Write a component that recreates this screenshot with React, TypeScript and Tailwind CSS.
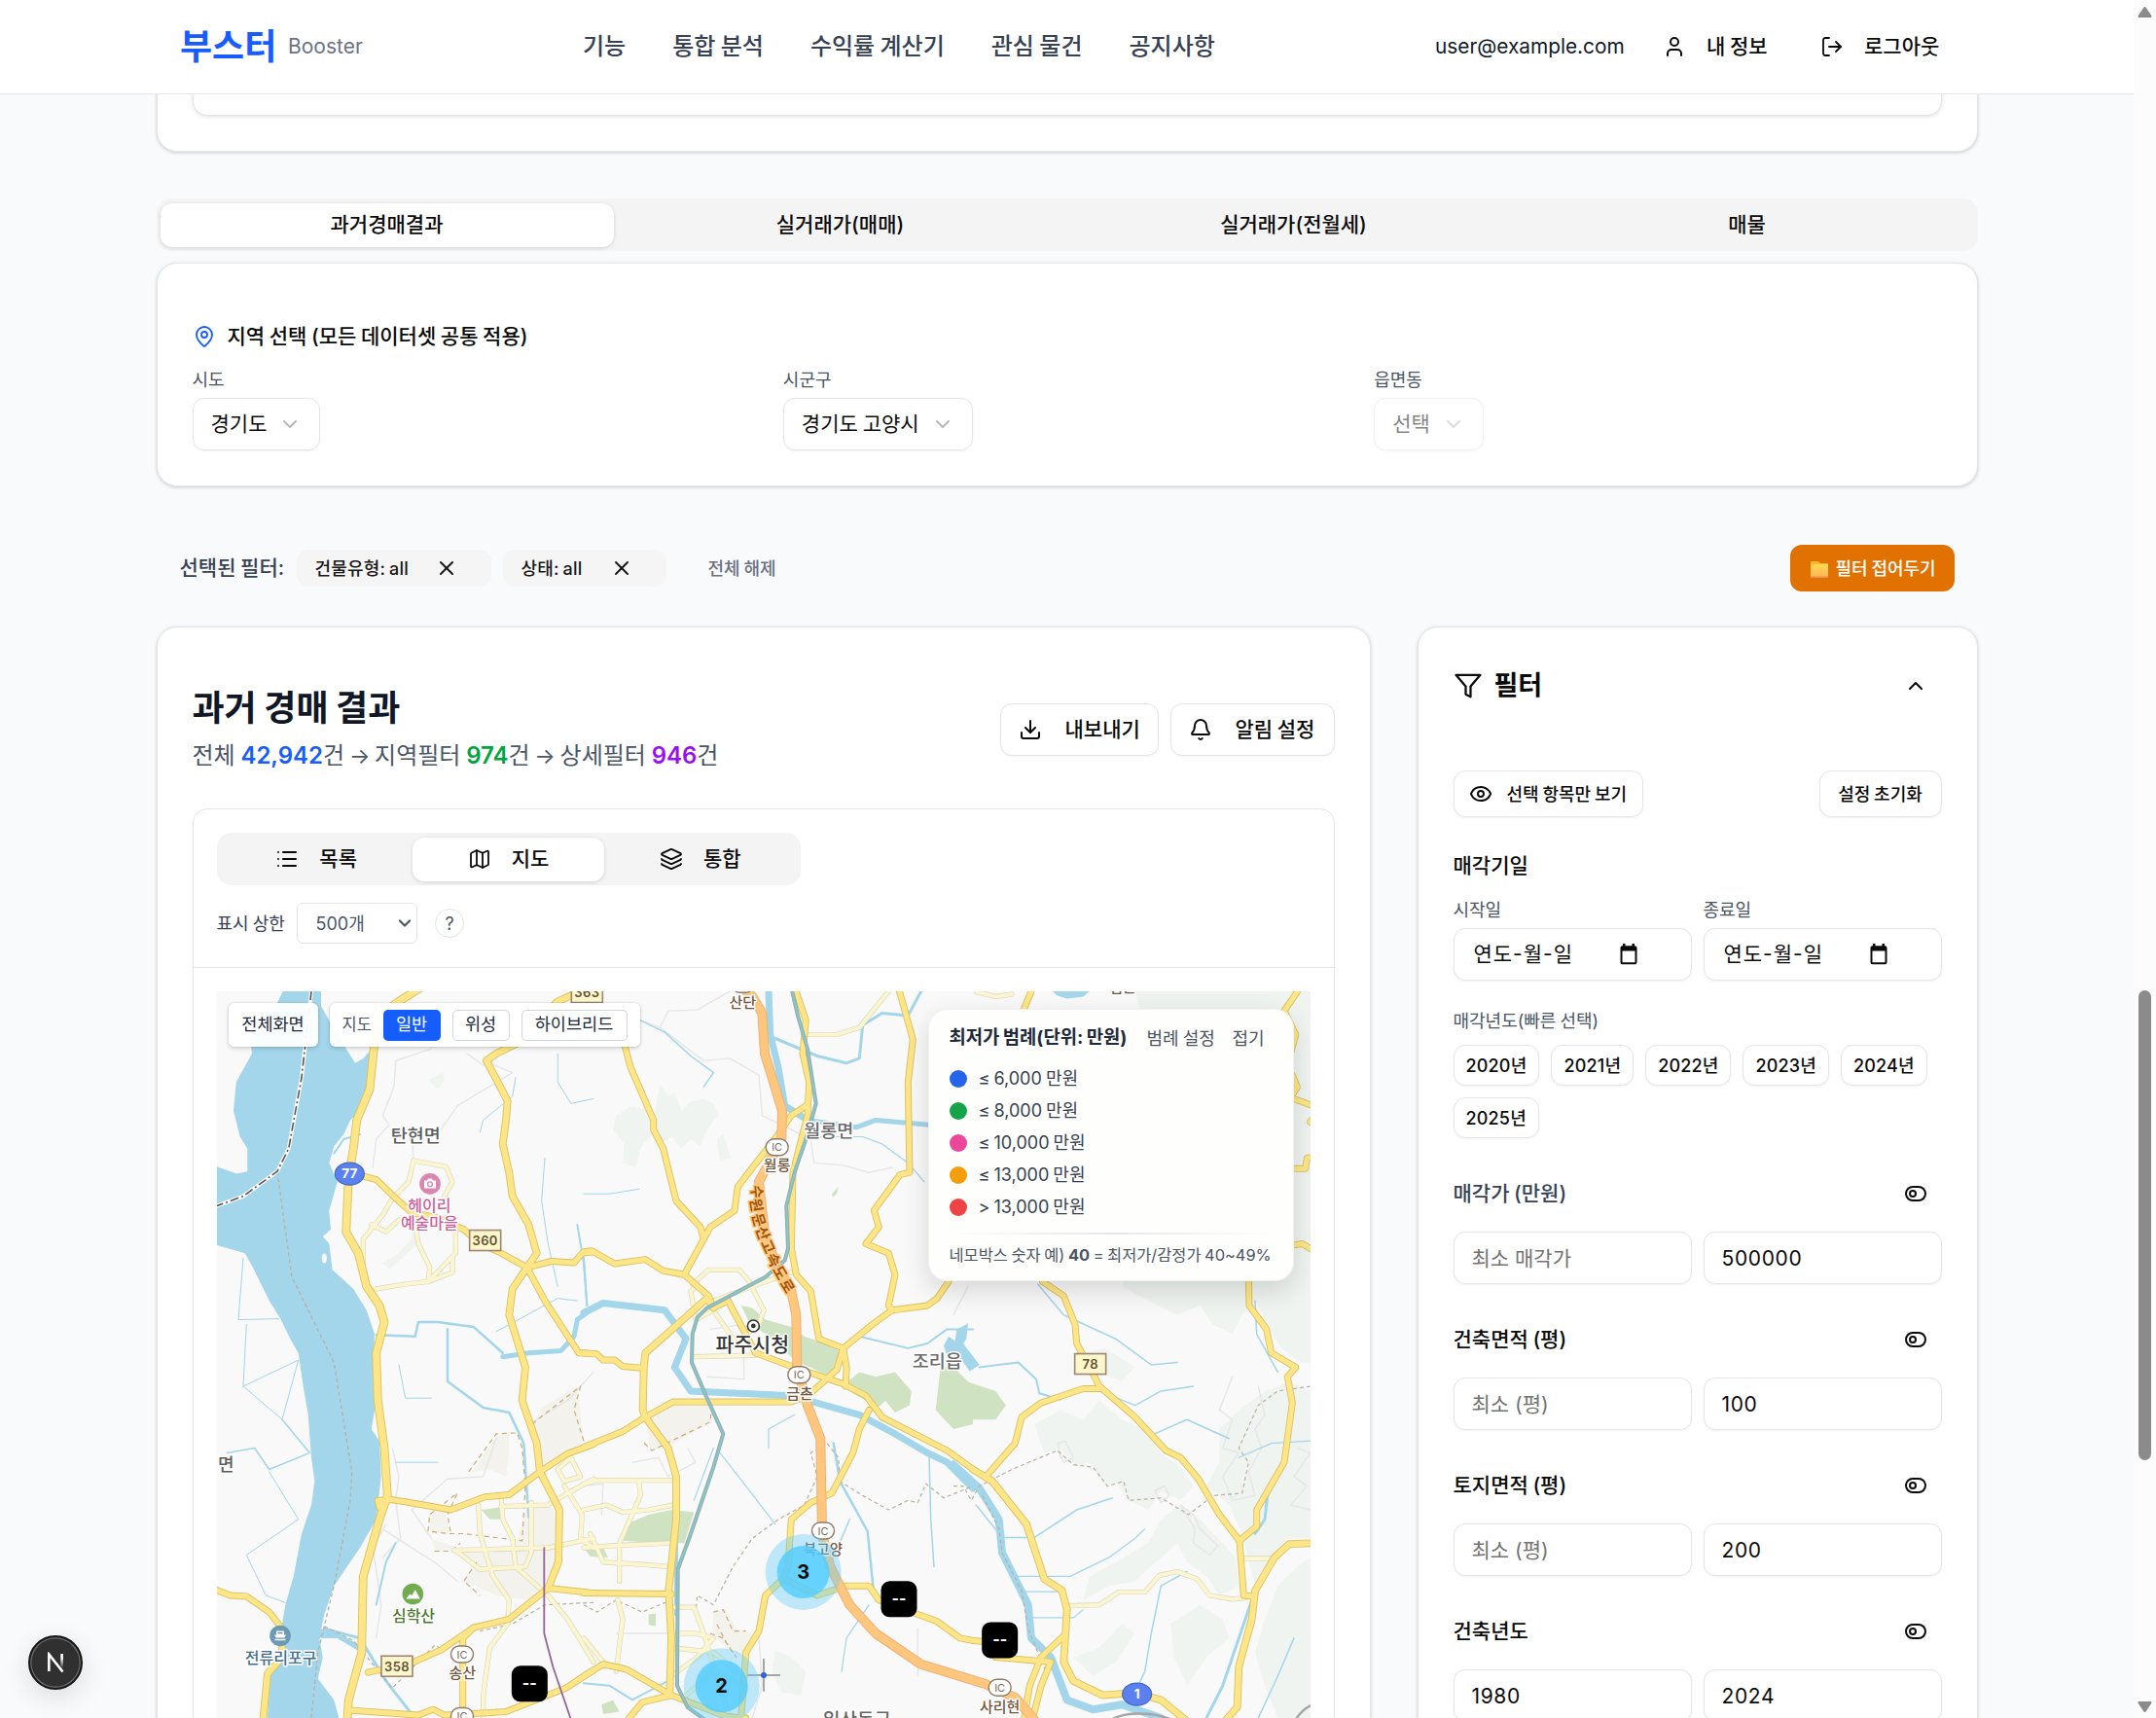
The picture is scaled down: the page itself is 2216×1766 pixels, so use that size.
import React from "react";
import {
  User, LogOut, MapPin, ChevronDown, ChevronUp, X, Download, Bell, List, Map as MapIcon, Layers, Eye, ToggleLeft,
} from "lucide-react";

type Origin = "A" | "B" | "C";
const OFFSET: Record<Origin, number> = { A: -13, B: 377, C: 757 };

function pts(o: Origin, s: string): string {
  return s
    .split(" ")
    .map((p) => {
      const [x, y] = p.split(",").map(Number);
      return `${(x / 3 + OFFSET[o]).toFixed(1)},${(y / 2.047 - 19).toFixed(1)}`;
    })
    .join(" ");
}
const mx = (o: Origin, x: number) => x / 3 + OFFSET[o];
const my = (y: number) => y / 2.047 - 19;

type Line = [Origin, string, number?];

const RIVER =
  "242,39 217,75 160,100 140,130 147,170 98,230 90,290 110,345 133,370 133,418 100,423 39,408 39,573 125,590 150,620 200,690 235,728 265,770 290,800 305,870 320,930 330,1020 340,1070 330,1120 300,1180 275,1270 250,1330 240,1370 240,1420 205,1470 195,1568 415,1568 400,1530 350,1485 365,1440 355,1400 370,1350 400,1290 480,1210 530,1150 545,1060 540,985 515,960 530,900 520,850 525,760 500,710 460,665 395,625 385,570 365,555 390,540 385,500 410,440 385,400 400,365 430,340 450,310 495,280 515,200 510,165 490,180 465,190 410,130 360,70 360,39";

const HILLS: Line[] = [
  ["B", "100,300 150,280 220,295 235,235 260,260 280,250 300,290 330,270 370,265 400,275 415,300 380,330 360,365 330,350 300,370 270,345 240,360 210,340 175,370 160,410 120,400 125,360 90,330"],
  ["B", "410,350 430,340 455,390 420,395"],
  ["B", "590,1425 640,1440 685,1470 670,1520 610,1515 580,1470"],
  ["A", "550,610 600,590 640,560 640,530 655,570 610,600 570,625"],
  ["A", "690,225 735,210 740,225 720,245"],
  ["C", "560,39 1100,39 1100,820 1070,820 1010,790 960,730 930,690 890,720 860,760 800,740 760,700 690,720 600,690 520,660 560,600 700,500 800,300 600,150"],
  ["C", "250,950 330,920 400,940 450,900 520,940 590,960 640,1010 700,1040 740,1080 700,1110 640,1090 600,1130 540,1110 500,1070 470,1080 420,1030 380,1040 330,1000 280,1010"],
  ["C", "700,1120 760,1150 830,1200 870,1230 880,1290 820,1310 780,1270 720,1240 690,1200 640,1230 560,1280 480,1290 400,1320 420,1270 500,1240 600,1200 640,1150"],
  ["C", "820,960 880,920 960,880 1040,860 1100,880 1100,1190 1030,1190 980,1230 930,1290 890,1180 850,1120 780,1080 820,1030"],
  ["C", "1000,1290 1060,1250 1100,1230 1100,1568 1000,1568 960,1500 930,1430 960,1360"],
  ["C", "370,1440 450,1420 520,1370 560,1390 500,1450 430,1480"],
  ["C", "670,1370 760,1330 830,1360 850,1400 780,1440 720,1500 680,1440"],
  ["C", "400,800 470,790 560,830 520,860 440,840"],
];

const PARKS: Line[] = [
  ["B", "485,700 520,705 560,730 640,745 680,765 740,780 800,800 790,840 740,845 700,830 660,820 610,790 560,760 510,735"],
  ["B", "815,860 850,840 900,850 960,840 1010,880 1005,910 960,925 930,900 900,920 870,900 830,885"],
  ["B", "1100,830 1140,830 1200,870 1200,950 1140,960 1085,920"],
  ["C", "0,840 40,860 130,880 162,910 130,940 60,940 0,960"],
  ["B", "130,1160 200,1140 270,1130 340,1135 310,1200 230,1200 120,1195"],
  ["B", "200,1350 222,1348 222,1375 200,1372"],
  ["A", "855,1130 910,1125 915,1150 880,1150"],
  ["B", "55,1540 90,1530 110,1555 60,1560"],
  ["B", "0,1210 60,1210 75,1230 20,1228"],
  ["B", "765,465 785,450 780,465 768,472"],
];

const SAND: Line[] = [
  ["A", "1000,970 1040,915 1150,870 1170,985 1120,1012 1040,1045 1025,990"],
  ["A", "825,1050 900,975 940,970 940,1010 930,1060 880,1045"],
  ["A", "700,1190 780,1210 960,1205 1000,1110 1090,1130 1090,1250 1000,1320 900,1310 800,1280 830,1240 780,1215 710,1215"],
  ["B", "190,935 275,910 385,905 395,945 250,1000 205,1005"],
  ["B", "400,1345 440,1340 470,1380 520,1390 490,1440 440,1420 395,1390"],
  ["A", "690,1145 740,1120 755,1180 700,1180"],
];

const STREAMS: Line[] = [
  ["B", "570,39 575,130 600,200 620,280 690,310", 7],
  ["B", "690,310 840,325 900,310 1065,320", 5],
  ["B", "580,135 720,175 810,190 850,180 860,110 920,85 1000,90 1040,39", 3],
  ["B", "0,715 60,695 250,710 315,770 280,830 330,880 640,890 850,930 960,970 1060,1010 1120,1030 1200,1085", 7],
  ["C", "0,1035 80,1085 140,1150 150,1220 230,1330 240,1400 300,1440 350,1530 430,1550 520,1540 640,1568", 8],
  ["A", "920,808 1000,800 1100,795 1140,765 1150,730 1200,705", 5],
  ["A", "530,762 650,765 660,735 720,735 830,745 920,800", 2.5],
  ["A", "750,750 750,860 810,890 860,915 940,925 985,990 1000,1145", 2.5],
  ["A", "120,600 105,730 230,728", 1],
  ["A", "130,740 120,870 240,940 290,815 120,870", 1],
  ["A", "240,940 325,1010 200,1045 155,1000 70,1010", 1.5],
  ["A", "200,1050 290,1150 130,1225 190,1310 250,1325", 1],
  ["A", "1150,530 1170,610 1180,700", 2],
  ["A", "1050,390 1040,480 1060,570 1090,660", 1],
  ["A", "900,755 1090,685 1150,690", 1],
  ["A", "1090,170 1090,230 1130,275 1200,265", 1],
  ["A", "960,220 950,260 860,310 850,335", 1],
  ["A", "480,340 430,350 400,380", 2],
  ["A", "370,1380 480,1400 560,1490 640,1560", 3],
  ["A", "530,1330 560,1240 590,1200", 2],
  ["A", "600,825 620,895 700,895", 1],
  ["A", "590,1030 720,1030", 1],
  ["B", "175,100 250,125 330,175 400,210 370,240", 1.5],
  ["B", "0,465 80,465 170,455", 1],
  ["B", "0,600 10,700", 2],
  ["B", "690,345 860,345 920,360 1000,400 1050,440", 1.2],
  ["B", "400,1000 340,1110", 1.2],
  ["B", "420,1010 500,1080 590,1160", 1.2],
  ["B", "570,1000 570,960 650,930", 1.2],
  ["B", "770,990 790,1070 875,1175 895,1310", 2.5],
  ["B", "1065,1020 1070,1150 1080,1250", 1.5],
  ["B", "820,1150 770,1230", 1.5],
  ["B", "880,1330 810,1400 795,1470", 1.2],
  ["B", "285,1200 285,1350", 4],
  ["B", "850,765 1000,790 1060,780 1120,750 1200,750", 2],
  ["C", "80,830 200,820 255,855 265,885 330,898", 2],
  ["C", "260,655 340,720 500,770 610,825 690,820", 1.5],
  ["C", "450,880 560,910 640,880 740,870", 1.5],
  ["C", "620,970 720,940 850,980", 1.5],
  ["C", "70,1120 150,1188 250,1188 380,1130 490,1105", 1.5],
  ["C", "190,1270 360,1270 480,1230 560,1190 590,1170", 1.2],
  ["C", "215,1302 335,1302", 1.2],
  ["C", "240,1357 370,1357 400,1340", 1.2],
  ["C", "920,1320 870,1420 830,1500 780,1568", 3],
  ["C", "970,1090 960,1150 930,1180", 3],
  ["C", "930,690 935,760 1000,840", 1.5],
  ["C", "720,1260 640,1290 610,1390 590,1470 570,1500", 1.5],
  ["C", "1050,1400 1000,1480 940,1568", 1.5],
  ["C", "880,1020 980,990 1100,985", 1.2],
  ["B", "0,1495 80,1500 150,1530 260,1490", 2],
];

const GREYS: Line[] = [
  ["A", "810,170 860,195 880,190 950,210 780,280 730,330 640,340 645,390"],
  ["A", "700,160 590,185 585,240 550,300 570,320 530,350 520,410"],
  ["A", "580,1000 600,1060 590,1110 605,1190 550,1230"],
  ["A", "700,1190 640,1130 750,1065 860,1060 900,980"],
  ["A", "550,1170 640,1210 710,1240 780,1280"],
  ["A", "1200,840 1120,900 1000,950"],
  ["A", "560,1160 520,1210 545,1330 530,1400"],
  ["B", "175,100 235,115 260,80 350,78 450,39"],
  ["B", "235,115 370,185 450,180 540,215 550,300 610,320"],
  ["B", "610,320 700,350 710,400 800,405 880,420 950,410"],
  ["B", "390,750 490,740 495,855 380,850"],
  ["B", "0,1080 60,1075 55,1140"],
  ["B", "150,1030 230,1020 260,1060 345,1030 320,1000"],
  ["B", "100,1390 270,1390"],
  ["B", "540,1395 550,1500 520,1568"],
  ["B", "1030,1380 1030,1480"],
  ["C", "45,660 0,720"],
  ["C", "860,850 820,920 860,940 830,1000 880,1010 830,1060 860,1110 930,1100 910,1050 950,1000 930,960 960,930 940,870"],
  ["C", "1060,1000 1100,1010 1050,1060 1090,1080 1040,1120 1100,1130"],
  ["C", "330,1010 320,990 345,985 370,1020 340,1030 320,1005"],
  ["C", "620,1090 650,1080 665,1100 640,1115 620,1090"],
  ["C", "700,1120 740,1140 760,1170 815,1205 790,1225 740,1200 745,1170 700,1120"],
];

const PALE: Line[] = [
  ["A", "490,630 490,560 550,510 580,475 630,440 645,395 745,408 765,440 740,470"],
  ["A", "515,530 560,545 600,520 650,530 660,570 695,620 690,650 620,655 530,665"],
  ["A", "775,545 775,590 690,650 765,630 765,600"],
  ["A", "770,1215 1060,1210 1200,1190"],
  ["A", "845,1120 850,1180 890,1270 940,1320 935,1370"],
  ["A", "915,1100 920,1150 950,1190 960,1250 1060,1310 1120,1360 1200,1450"],
  ["A", "1008,1115 1008,1220 990,1250 850,1255 775,1215"],
  ["A", "915,1123 1060,1120 1120,1095 1200,1065"],
  ["A", "1090,1045 1130,1020 1160,1060 1110,1070 1090,1045"],
  ["A", "1110,1080 1165,1140 1160,1190 1200,1210"],
  ["A", "860,1568 860,1520 880,1420 935,1370"],
  ["B", "0,1075 40,1068 270,1068"],
  ["B", "170,1070 175,1100 110,1200 110,1280"],
  ["B", "0,1130 70,1120 120,1135 200,1130 275,1120"],
  ["B", "0,1210 100,1205 265,1200"],
  ["B", "20,1180 60,1240 180,1245 265,1250"],
  ["B", "345,660 330,670 345,730 400,710 470,780 540,740 555,710 510,650 480,625 385,625 335,655"],
  ["B", "400,690 520,660 640,630"],
  ["B", "335,808 530,805"],
  ["B", "695,130 780,130 850,115 940,39"],
  ["B", "105,1320 120,1360 100,1470"],
  ["B", "280,1335 340,1335 370,1390 450,1568"],
  ["B", "270,1420 400,1430 470,1470"],
  ["B", "270,1480 350,1440 400,1400 345,1390 290,1390"],
  ["B", "300,1530 400,1470 480,1500"],
  ["B", "0,1400 60,1450"],
  ["C", "70,40 130,50 180,45"],
  ["C", "355,1332 450,1330 510,1303 590,1303 635,1268 690,1260 750,1275 790,1310 860,1318 900,1315"],
  ["C", "895,1232 980,1232"],
];

const ROADS: Line[] = [
  ["A", "670,30 600,60 560,80 530,110 510,245 470,310 460,370 445,430 437,545 475,590 500,660 540,700 555,735 530,800 535,900 555,1000 565,1100 540,1150 490,1270 485,1430 445,1530 440,1580", 7],
  ["A", "490,428 530,435 580,468 640,505 720,515 800,540 850,570 910,588 995,620"],
  ["A", "1130,48 1090,60 1060,80 960,150 900,170 870,185 905,230 935,270 930,310 920,360 940,420 950,470 1000,530 1025,590 995,620 950,665 940,720 990,830 980,900 1025,990 1035,1050 1095,1130 1092,1240 1060,1295", 6],
  ["A", "995,620 1070,607 1140,610 1165,590 1200,587"],
  ["B", "0,587 25,585 95,612 190,603 245,627 310,635 385,680 400,705 445,690"],
  ["A", "995,620 1050,690 1155,800 1200,802"],
  ["B", "0,800 40,802 60,815 95,815 120,828 185,832"],
  ["A", "565,1110 535,1110 540,1125 570,1108 620,1113 760,1130 865,1103 940,1098 1035,1050 1120,1012 1200,992"],
  ["B", "0,998 120,965 190,935 275,903 640,903 690,890 740,860 780,835 800,790 890,740 950,710 1060,700 1090,685 1125,650"],
  ["A", "505,1472 640,1452 730,1425 830,1378 940,1360 1060,1295 1200,1305"],
  ["B", "0,1305 270,1307"],
  ["A", "30,1297 80,1310 130,1312 200,1345 240,1380"],
  ["A", "240,1420 240,1440 195,1475 180,1580", 6],
  ["A", "830,1378 797,1400 797,1568"],
  ["A", "455,1552 660,1562 705,1550 740,1562 930,1555 1115,1505 1200,1467"],
  ["B", "0,1480 60,1455 130,1465 270,1520 440,1565 500,1568"],
  ["B", "125,150 145,200 215,310 215,330 245,370 285,480 360,535 370,560"],
  ["B", "310,635 390,535 465,500 475,450 600,340 640,300 690,278"],
  ["B", "650,30 685,100 675,170 695,230 690,300 645,420 640,580 655,635 700,670 725,770 800,790 810,830 808,870"],
  ["B", "445,690 530,800 640,828 800,865 870,890 920,935 1120,1005 1210,1049"],
  ["B", "400,705 380,685 190,800 185,832 182,920 190,935 260,1000 285,1060 285,1150 262,1300 270,1400 265,1520", 6],
  ["B", "880,920 850,960 830,1010 765,1095 700,1115 640,1150 630,1250 615,1275 560,1310 540,1385 500,1430 485,1568"],
  ["B", "615,1275 720,1310 810,1290 880,1290 910,1320 1090,1365 1160,1400 1200,1405"],
  ["B", "970,30 1015,140 1000,230 1005,420 975,425 895,500 910,535 870,570 940,590 960,635 940,700 950,710"],
  ["B", "140,1568 180,1535 270,1520"],
  ["C", "245,30 215,80"],
  ["C", "1070,30 1020,80 1055,130 1035,180"],
  ["C", "1045,215 1060,240 1040,263 1105,279"],
  ["C", "1040,412 1085,412 1090,390 1110,388"],
  ["C", "1040,574 1075,570 1110,584"],
  ["C", "1110,305 1100,314"],
  ["C", "275,650 340,680 375,740 380,780 435,850 450,870 560,935 655,1005 700,1020 755,1065 820,1140 882,1195 895,1310 920,1312"],
  ["C", "450,875 400,875 335,890 270,905 210,935 190,990 100,1060"],
  ["C", "60,1045 120,1070 225,1160 280,1275 335,1300 350,1340 340,1450 370,1490 460,1520 560,1515 640,1530 730,1580", 6],
  ["C", "910,640 912,700 965,750 980,800 1055,830 1030,850 1045,905 1020,1030 935,1130 935,1165 882,1195"],
  ["C", "1110,1200 1035,1202 990,1230 930,1300 920,1360 880,1460 875,1545 830,1580", 6],
  ["C", "60,1405 90,1407"],
  ["C", "130,1440 300,1450 270,1500 240,1580"],
  ["C", "340,1395 270,1440 235,1500 215,1580"],
];

const HIGHWAY: Line[] = [
  ["B", "480,25 520,50 550,85 558,170 585,230 612,290 610,350 540,440 560,560 600,620 640,670 655,720 658,830 690,910 730,980 735,1180 760,1250 820,1330 900,1390 1040,1455 1240,1497 1330,1525 1400,1580"],
];

const RAIL =
  "640,30 660,90 690,160 716,275 690,340 650,420 625,490 630,580 620,605 560,640 450,680 380,705 350,725 335,760 333,820 380,895 430,970 400,1040 330,1180 290,1255 288,1500 320,1545 390,1580";

const BOUNDS: Line[] = [
  ["A", "225,418 270,640 400,820 455,1050 450,1110 400,1290 350,1430 330,1568"],
  ["A", "370,1375 460,1405 580,1505 710,1415 740,1425"],
  ["A", "850,1385 950,1370 1050,1330 1200,1325"],
  ["B", "0,1330 40,1345 100,1320 180,1345 270,1320"],
  ["B", "345,1350 350,1310 400,1330 460,1250 520,1190 600,1150 680,1120 720,1060 700,1010 750,990 785,1020 790,1070 860,1100 940,1130 1000,1110 1030,1115 1055,1075 1110,1105 1200,1080"],
  ["C", "0,1080 30,1080 55,1110 80,1080 180,1045 320,1005 370,1035 430,1040 475,1080 525,1070 540,1110 640,1105 725,1140 800,1100 890,1095 910,1030 880,1000 940,910 1000,880 1100,870"],
  ["C", "90,1100 140,1170 150,1220 210,1300 230,1380 290,1480"],
];

const TAN: Line[] = [
  ["A", "815,1050 900,970 965,968 980,1000 990,1080 980,1195 800,1180 755,1180 690,1175 695,1140 780,1095 750,1140 760,1180"],
  ["A", "1170,985 1140,920 1160,870 1000,955"],
  ["A", "840,1240 800,1280 850,1310"],
  ["A", "710,1217 760,1217 790,1200"],
  ["B", "395,910 390,945 210,1005 180,985"],
  ["B", "400,1345 430,1340 460,1385 500,1385"],
  ["B", "390,1390 430,1400 470,1440 440,1410 410,1370"],
];

function Poly({ d, fill }: { d: Line; fill: string }) {
  return <polygon points={pts(d[0], d[1])} fill={fill} />;
}
function Strokes({ lines, color, width, extra = 0, dash }: { lines: Line[]; color: string; width: number; extra?: number; dash?: string }) {
  return (
    <g fill="none" stroke={color} strokeLinejoin="round" strokeLinecap={dash ? "butt" : "round"} strokeDasharray={dash}>
      {lines.map((l, i) => (
        <polyline key={i} points={pts(l[0], l[1])} strokeWidth={(l[2] ?? width) + extra} />
      ))}
    </g>
  );
}
function Label({ o, x, y, size, color, children, weight = 500 }: { o: Origin; x: number; y: number; size: number; color: string; children: string; weight?: number }) {
  return (
    <text x={mx(o, x)} y={my(y) + size * 0.37} fontSize={size} fontWeight={weight} fill={color} stroke="#fff" strokeWidth={3} strokeLinejoin="round" paintOrder="stroke" textAnchor="middle">
      {children}
    </text>
  );
}
function Ic({ o, x, y }: { o: Origin; x: number; y: number }) {
  return (
    <g>
      <rect x={mx(o, x) - 11.5} y={my(y) - 8.5} width={23} height={17} rx={8.5} fill="#fff" stroke="#8f7968" strokeWidth={1.4} />
      <text x={mx(o, x)} y={my(y) + 4} fontSize={11} fill="#7d6a5c" textAnchor="middle">IC</text>
    </g>
  );
}
function RouteBox({ o, x, y, children }: { o: Origin; x: number; y: number; children: string }) {
  return (
    <g>
      <rect x={mx(o, x) - 16} y={my(y) - 10.5} width={32} height={21} fill="#fcf6cd" stroke="#9d8570" strokeWidth={1.6} />
      <text x={mx(o, x)} y={my(y) + 4.8} fontSize={13} fontWeight={600} fill="#63532f" textAnchor="middle" letterSpacing={0.4}>{children}</text>
    </g>
  );
}
function RouteOval({ o, x, y, children }: { o: Origin; x: number; y: number; children: string }) {
  return (
    <g>
      <ellipse cx={mx(o, x)} cy={my(y)} rx={15} ry={11.5} fill="#5b81f0" stroke="#4468c8" strokeWidth={1.2} />
      <text x={mx(o, x)} y={my(y) + 4.8} fontSize={13.5} fontWeight={700} fill="#fff" textAnchor="middle">{children}</text>
    </g>
  );
}
function Cluster({ x, y, n }: { x: number; y: number; n: string }) {
  return (
    <g>
      <circle cx={mx("B", x)} cy={my(y)} r={39} fill="#5fcdf9" fillOpacity={0.38} />
      <circle cx={mx("B", x)} cy={my(y)} r={27} fill="#51ccff" fillOpacity={0.8} />
      <text x={mx("B", x)} y={my(y) + 7} fontSize={20} fontWeight={700} fill="#0c0c0c" textAnchor="middle">{n}</text>
    </g>
  );
}
function Marker({ o, x, y }: { o: Origin; x: number; y: number }) {
  return (
    <g>
      <rect x={mx(o, x) - 18.5} y={my(y) - 18.5} width={37} height={37} rx={9} fill="#000" />
      <text x={mx(o, x)} y={my(y) + 5} fontSize={16} fontWeight={700} fill="#fff" textAnchor="middle">--</text>
    </g>
  );
}

function MapCanvas() {
  return (
    <svg width="1124" height="747" viewBox="0 0 1124 747" className="block">
      <rect width="1124" height="747" fill="#f9f9f9" />
      {HILLS.map((d, i) => <Poly key={i} d={d} fill="#f0f4f1" />)}
      {SAND.map((d, i) => <Poly key={i} d={d} fill="#f4f2ed" />)}
      {PARKS.map((d, i) => <Poly key={i} d={d} fill="#cfe2c1" />)}
      <polygon points={pts("A", RIVER)} fill="#a3d5eb" />
      <ellipse cx={mx("A", 370)} cy={my(601)} rx={2.5} ry={5} fill="#f9f9f9" />
      <polygon points={pts("C", "305,39 420,39 400,50 350,54 320,48")} fill="#a3d5eb" />
      <polygon points={pts("C", "-15,765 5,775 10,750 45,738 40,770 30,780 80,825 50,838 20,810 -20,805 -30,785")} fill="#a3d5eb" />
      <polygon points={pts("A", "350,1380 400,1385 480,1415 510,1430 470,1425 410,1400 350,1400")} fill="#a3d5eb" />
      <Strokes lines={GREYS} color="#e6e6e6" width={1.4} />
      <Strokes lines={STREAMS} color="#a3d5eb" width={2} />
      <Strokes lines={TAN} color="#c9ab78" width={1.2} dash="5 4" />
      <Strokes lines={BOUNDS} color="#b9b09c" width={1.2} dash="4 3" />
      <Strokes lines={[["A", "330,39 300,220 260,370 225,418 120,470 39,490"]]} color="#ffffff" width={4} />
      <Strokes lines={[["A", "330,39 300,220 260,370 225,418 120,470 39,490"]]} color="#555" width={1.6} dash="9 3 2 3" />
      <Strokes lines={PALE} color="#d8d5bd" width={4} extra={1.2} />
      <Strokes lines={PALE} color="#fbf6cf" width={4} />
      <Strokes lines={ROADS} color="#d8c25f" width={5.2} extra={1.8} />
      <Strokes lines={ROADS} color="#fde588" width={5.2} />
      <Strokes lines={HIGHWAY} color="#eeb077" width={10} />
      <Strokes lines={HIGHWAY} color="#ffc67d" width={8} />
      <Strokes lines={[["B", RAIL]]} color="#a5a5a5" width={4} />
      <Strokes lines={[["B", RAIL]]} color="#7accd0" width={2} />
      <Strokes lines={[["A", "1048,1210 1048,1390 1075,1460 1135,1580"]]} color="#95659a" width={1.8} />

      <Label o="A" x={652} y={343} size={18.5} color="#5b5b5b">탄현면</Label>
      <Label o="B" x={755} y={331} size={18.5} color="#6b6b6b">월롱면</Label>
      <Label o="A" x={67} y={1035} size={18} color="#5b5b5b">면</Label>
      <Label o="B" x={490} y={62} size={15} color="#74563c">산단</Label>
      <Label o="C" x={522} y={30} size={15} color="#74563c">검문</Label>
      <Label o="B" x={596} y={405} size={15} color="#74563c">월롱</Label>
      <Label o="B" x={520} y={783} size={20.5} color="#333">파주시청</Label>
      <Label o="B" x={666} y={886} size={15} color="#74563c">금촌</Label>
      <Label o="B" x={1090} y={818} size={18.5} color="#6b6b6b">조리읍</Label>
      <Label o="B" x={738} y={1214} size={14.5} color="#74563c">북고양</Label>
      <Label o="B" x={843} y={1572} size={19} color="#666">일산동구</Label>
      <Label o="C" x={143} y={1545} size={15} color="#74563c">사리현</Label>
      <Label o="A" x={796} y={1473} size={15} color="#74563c">송산</Label>
      <Label o="A" x={645} y={1353} size={16} color="#4b7a2c">심학산</Label>
      <Label o="A" x={236} y={1441} size={16} color="#44708c">전류리포구</Label>
      <Label o="A" x={694} y={490} size={16} color="#cf5f99">헤이리</Label>
      <Label o="A" x={694} y={526} size={16} color="#cf5f99">예술마을</Label>

      <circle cx={mx("B", 523)} cy={my(743)} r={6} fill="#fff" stroke="#333" strokeWidth={1.6} />
      <circle cx={mx("B", 523)} cy={my(743)} r={2.4} fill="#333" />

      <circle cx={mx("A", 696)} cy={my(444)} r={10.8} fill="#d987b1" />
      <path d={`M${mx("A", 696) - 6} ${my(444) - 3.5}h3l1.2-2h3.6l1.2 2h3v8h-12z`} fill="#fff" />
      <circle cx={mx("A", 696)} cy={my(444) + 0.4} r={2.4} fill="#fff" stroke="#d987b1" strokeWidth={1.3} />
      <circle cx={mx("A", 643)} cy={my(1307)} r={10.8} fill="#71ad4e" />
      <path d={`M${mx("A", 643) - 7} ${my(1307) + 5}l4-5 2 1.500 3.500-6 5 9.500z`} fill="#fff" />
      <circle cx={mx("A", 234)} cy={my(1395)} r={10.8} fill="#6b9ab5" />
      <path d={`M${mx("A", 234) - 4} ${my(1395) - 5}h8v4h2l-1.500 3h-9l-1.500-3h2z`} fill="#fff" />
      <path d={`M${mx("A", 234) - 5.5} ${my(1395) + 4}h11`} stroke="#fff" strokeWidth={1.5} />
      <path d={`M${mx("A", 234) - 2.5} ${my(1395) - 2.8}h5`} stroke="#6b9ab5" strokeWidth={1.4} />

      <RouteOval o="A" x={448} y={423}>77</RouteOval>
      <RouteOval o="C" x={566} y={1518}>1</RouteOval>
      <RouteBox o="A" x={866} y={563}>360</RouteBox>
      <RouteBox o="A" x={594} y={1459}>358</RouteBox>
      <RouteBox o="C" x={422} y={823}>78</RouteBox>
      <RouteBox o="A" x={1180} y={41}>363</RouteBox>
      <Ic o="B" x={596} y={367} />
      <Ic o="B" x={664} y={846} />
      <Ic o="B" x={738} y={1174} />
      <Ic o="A" x={795} y={1434} />
      <Ic o="A" x={795} y={1564} />
      <Ic o="C" x={143} y={1504} />
      <Ic o="B" x={490} y={24} />

      {["수", "원", "문", "산", "고", "속", "도", "로"].map((c, i) => {
        const xs = [534, 532, 540, 552, 568, 585, 605, 628];
        const ys = [461, 489, 520, 548, 576, 604, 631, 659];
        const rot = [85, 80, 74, 70, 66, 62, 60, 58];
        const x = mx("B", xs[i]);
        const y = my(ys[i]);
        return (
          <text key={i} x={x} y={y + 5.5} transform={`rotate(${rot[i]} ${x} ${y})`} fontSize={15} fontWeight={600} fill="#a2560c" stroke="#ffc67d" strokeWidth={3} paintOrder="stroke" textAnchor="middle">
            {c}
          </text>
        );
      })}

      <path d={`M${mx("B", 505)} ${my(1478)}H${mx("B", 606)}M${mx("B", 555)} ${my(1443)}V${my(1512)}`} stroke="#8b8b8b" strokeWidth={1.5} />
      <circle cx={mx("B", 555)} cy={my(1478)} r={3} fill="#2f62e8" />
      <Cluster x={677} y={1261} n="3" />
      <Cluster x={425} y={1501} n="2" />
      <Marker o="A" x={1003} y={1496} />
      <Marker o="B" x={972} y={1318} />
      <Marker o="C" x={143} y={1404} />
      <path d={`M${mx("C", 490)} 748q12-6 29-5.500q16 0 30 5.500`} fill="none" stroke="#a5a5a5" strokeWidth={2.5} />
      <path d="M1109 748q6-9 15-14" fill="none" stroke="#a5a5a5" strokeWidth={2.5} />
    </svg>
  );
}

const LEGEND = [
  ["bg-[#2563eb]", "≤ 6,000 만원"],
  ["bg-[#16a34a]", "≤ 8,000 만원"],
  ["bg-[#ec4899]", "≤ 10,000 만원"],
  ["bg-[#f59e0b]", "≤ 13,000 만원"],
  ["bg-[#ef4444]", "> 13,000 만원"],
];

function MapOverlays() {
  return (
    <>
      <div className="absolute left-[12px] top-[12px] flex h-[45px] w-[92px] items-center justify-center rounded-[6px] bg-white/95 text-[17.5px] text-[#1e2939] shadow-[0_0_2px_rgba(0,0,0,0.2),0_2px_4px_rgba(0,0,0,0.15)]">전체화면</div>
      <div className="absolute left-[116px] top-[12px] flex h-[45px] w-[319px] items-center rounded-[6px] bg-white/95 pl-[13px] text-[17.5px] text-[#1e2939] shadow-[0_0_2px_rgba(0,0,0,0.2),0_2px_4px_rgba(0,0,0,0.15)]">
        <span className="w-[42px] text-[16.5px] text-[#4a5565]">지도</span>
        <span className="flex h-[32px] w-[59px] items-center justify-center rounded-[5px] bg-[#155dfc] text-white">일반</span>
        <span className="ml-[12px] flex h-[32px] w-[59px] items-center justify-center rounded-[5px] border border-[#d1d5dc] bg-white">위성</span>
        <span className="ml-[12px] flex h-[32px] w-[109px] items-center justify-center rounded-[5px] border border-[#d1d5dc] bg-white">하이브리드</span>
      </div>
      <div className="absolute left-[731px] top-[18px] flex h-[280px] w-[376px] flex-col rounded-[20px] border border-black/5 bg-[#fefefc]/97 px-[21px] pt-[13px] text-[18px] text-[#374151] shadow-[0_10px_28px_rgba(0,0,0,0.14)]">
        <div className="flex h-[32px] items-center whitespace-nowrap text-[#4b5563]">
          <span className="w-[203px] text-[18.800px] font-bold text-[#1e293b]">최저가 범례(단위: 만원)</span>
          <span className="w-[88px]">범례 설정</span>
          <span>접기</span>
        </div>
        <div className="mt-[9px]">
          {LEGEND.map(([c, t]) => (
            <div key={t} className="flex h-[33px] items-center gap-[12px]">
              <span className={"size-[18px] rounded-full " + c} />
              <span>{t}</span>
            </div>
          ))}
        </div>
        <div className="mt-[10px] h-[2px] bg-gradient-to-r from-transparent via-[#e5e7eb] to-transparent" />
        <div className="mt-[9px] flex h-[24px] items-center whitespace-pre text-[16.400px] text-[#4b5563]">
          네모박스 숫자 예) <b>40</b> = 최저가/감정가 40~49%
        </div>
      </div>
    </>
  );
}

const card = "rounded-[21px] border border-[#e4e5e7] bg-white shadow-[0_1px_4px_rgba(0,0,0,0.12),0_1px_3px_rgba(0,0,0,0.08)]";
const box = "rounded-[12px] border border-[#e5e5e5] bg-white shadow-[0_1px_3px_rgba(0,0,0,0.05)]";

function SelectBox({ text, className }: { text: string; className: string }) {
  return (
    <div className={box + " mt-[6px] flex h-[54px] items-center justify-between pl-[18px] pr-[18px] text-[21px] " + className}>
      <span>{text}</span>
      <ChevronDown size={24} strokeWidth={2} className="text-[#737373] opacity-50" />
    </div>
  );
}
function Chip({ text, className }: { text: string; className: string }) {
  return (
    <div className={"flex h-[38px] items-center rounded-[12px] bg-[#f5f5f5] pl-[19px] text-[18px] font-medium text-[#171717] " + className}>
      <span className="flex-1 whitespace-nowrap tracking-[0.01em]">{text}</span>
      <X size={24} strokeWidth={2} className="mr-[34px]" />
    </div>
  );
}
function CalendarGlyph() {
  return (
    <svg width="20" height="22" viewBox="0 0 20 22" className="text-[#0a0a0a]">
      <path fill="currentColor" fillRule="evenodd" d="M4 0h2.500v2.200h7V0H16v2.200h.5A2 2 0 0 1 18.500 4.200v15a2 2 0 0 1-2 2h-13a2 2 0 0 1-2-2v-15a2 2 0 0 1 2-2H4zM3.500 7.400v11.800h13V7.400z" />
    </svg>
  );
}
function DateField({ label }: { label: string }) {
  return (
    <div className="flex-1">
      <div className="h-[24px] text-[18px] leading-[24px] text-[#4a5565]">{label}</div>
      <div className={box + " mt-[6px] flex h-[54px] items-center pl-[20px] text-[21px]"}>
        <span className="w-[149px] whitespace-nowrap tracking-[0.047em]">연도-월-일</span>
        <CalendarGlyph />
      </div>
    </div>
  );
}
function RangeField({ title, min, max, minPh, muted }: { title: string; min?: string; max: string; minPh?: string; muted?: boolean }) {
  return (
    <div className="mb-[33px]">
      <div className="flex h-[48px] items-center justify-between pr-[15px]">
        <span className={"text-[21px] font-medium " + (muted ? "text-[#364153]" : "text-[#0a0a0a]")}>{title}</span>
        <ToggleLeft size={24} strokeWidth={2} />
      </div>
      <div className="mt-[15px] flex gap-[12px]">
        <input readOnly value={min ?? ""} placeholder={minPh} className={box + " h-[54px] w-0 flex-1 px-[18px] text-[21px] tracking-[0.03em] placeholder:text-[#737373] placeholder:tracking-normal"} />
        <input readOnly value={max} className={box + " h-[54px] w-0 flex-1 px-[18px] text-[21px] tracking-[0.03em]"} />
      </div>
    </div>
  );
}
function Arrow() {
  return <span className="-mx-[1px] text-[22.500px]">→</span>;
}

export default function App() {
  return (
    <div className="flex h-[1766px] w-[2216px] overflow-hidden bg-[#f9fafb] font-['Inter','Noto_Sans_CJK_KR',sans-serif] text-[#0a0a0a] [word-spacing:-1px]">
      <div className="relative w-[2193px] shrink-0">
        <header className="relative z-10 flex h-[97px] items-center border-b border-[#e2e4e8] bg-white pl-[185px]">
          <div className="flex w-[414px] items-center whitespace-nowrap">
            <span className="w-[111px] text-[36px] font-bold text-[#155dfc]">부스터</span>
            <span className="text-[21px] text-[#6a7282]">Booster</span>
          </div>
          <nav className="flex w-[876px] gap-[48px] whitespace-nowrap text-[24px] font-medium text-[#364153]">
            <span>기능</span><span>통합 분석</span><span>수익률 계산기</span><span>관심 물건</span><span>공지사항</span>
          </nav>
          <span className="w-[234px] whitespace-nowrap text-[20.800px] text-[#101828]">user@example.com</span>
          <div className="flex w-[162px] items-center gap-[21px] whitespace-nowrap text-[21px] font-medium"><User size={24} /><span>내 정보</span></div>
          <div className="flex items-center gap-[21px] whitespace-nowrap text-[21px] font-medium"><LogOut size={24} strokeWidth={1.8} /><span>로그아웃</span></div>
        </header>

        <main className="mx-auto w-[1872px]">
          <div className={card + " -mt-[40px] h-[99px] px-[36px]"}>
            <div className="h-[61px] rounded-[15px] border border-[#e4e5e7] bg-white shadow-[0_1px_4px_rgba(0,0,0,0.12)]" />
          </div>

          <div className="mt-[48px] flex h-[54px] items-center rounded-[15px] bg-[#f4f4f4] p-[4px] text-[21px] font-medium">
            {["과거경매결과", "실거래가(매매)", "실거래가(전월세)", "매물"].map((t, i) => (
              <div key={t} className={"flex h-[45px] flex-1 items-center justify-center rounded-[12px] pb-[1px] " + (i === 0 ? "bg-white shadow-[0_1px_4px_rgba(0,0,0,0.14)]" : "")}>{t}</div>
            ))}
          </div>

          <section className={card + " mt-[12px] h-[230px] px-[36px] pt-[59px]"}>
            <div className="flex h-[32px] items-center gap-[12px] text-[21px] font-medium">
              <MapPin size={24} strokeWidth={1.8} className="text-[#155dfc]" />
              <span>지역 선택 (모든 데이터셋 공통 적용)</span>
            </div>
            <div className="mt-[17px] grid grid-cols-3 gap-[24px]">
              <div><div className="h-[24px] text-[18px] leading-[24px] text-[#4a5565]">시도</div><SelectBox text="경기도" className="w-[131px]" /></div>
              <div><div className="h-[24px] text-[18px] leading-[24px] text-[#4a5565]">시군구</div><SelectBox text="경기도 고양시" className="w-[195px]" /></div>
              <div><div className="h-[24px] text-[18px] leading-[24px] text-[#4a5565]">읍면동</div><SelectBox text="선택" className="w-[113px] opacity-50" /></div>
            </div>
          </section>

          <div className="mt-[60px] flex h-[48px] items-center pl-[24px] pr-[24px]">
            <span className="w-[120px] whitespace-nowrap text-[21px] font-medium text-[#364153]">선택된 필터:</span>
            <Chip text="건물유형: all" className="w-[200px]" />
            <Chip text="상태: all" className="ml-[12px] w-[168px]" />
            <span className="ml-[43px] text-[18px] font-medium text-[#6a7282]">전체 해제</span>
            <div className="ml-auto flex h-[48px] w-[169px] items-center rounded-[12px] bg-[#e17100] pl-[21px] text-[18px] font-medium text-white">
              <svg width="18" height="18" viewBox="0 0 18 18" className="mr-[8px] mt-[2px]">
                <defs><linearGradient id="fold" x1="0" y1="0" x2="0" y2="1"><stop offset="0" stopColor="#ffdb4d" /><stop offset="1" stopColor="#ffb25c" /></linearGradient></defs>
                <path d="M0 2a1 1 0 0 1 1-1h7l2 2h7a1 1 0 0 1 1 1v5H0z" fill="#ffb52e" />
                <rect y="4" width="18" height="13.500" rx="1" fill="url(#fold)" />
                <rect y="16.500" width="18" height="1" fill="#f2914d" />
              </svg>
              <span className="whitespace-nowrap">필터 접어두기</span>
            </div>
          </div>

          <div className="mt-[36px] flex items-start gap-[48px]">
            <section className={card + " h-[1240px] w-[1248px] px-[36px] pt-[62px]"}>
              <div className="flex items-center justify-between">
                <div>
                  <h2 className="h-[44px] text-[36px] font-bold leading-[42px] text-[#101828]">과거 경매 결과</h2>
                  <p className="mt-[8px] h-[35px] whitespace-nowrap text-[24px] leading-[36px] text-[#4a5565]">
                    전체 <b className="font-semibold text-[#155dfc]">42,942</b>건 <Arrow /> 지역필터 <b className="font-semibold text-[#00a63e]">974</b>건 <Arrow /> 상세필터 <b className="font-semibold text-[#9810fa]">946</b>건
                  </p>
                </div>
                <div className="flex gap-[12px] whitespace-nowrap text-[21px] font-medium">
                  <div className={box + " -mt-[2px] flex h-[54px] w-[163px] items-center gap-[24px] pl-[18px]"}><Download size={24} strokeWidth={2} /><span>내보내기</span></div>
                  <div className={box + " -mt-[2px] flex h-[54px] w-[169px] items-center gap-[24px] pl-[18px]"}><Bell size={24} strokeWidth={2} /><span>알림 설정</span></div>
                </div>
              </div>

              <div className="mt-[37px] h-[1000px] rounded-[15px] border border-[#e5e5e5]">
                <div className="h-[163px] border-b border-[#e5e5e5] px-[24px] pt-[24px]">
                  <div className="flex h-[54px] w-[600px] items-center rounded-[15px] bg-[#f4f4f4] p-[4px] text-[21px] font-medium">
                    <div className="flex h-[45px] flex-1 items-center justify-center gap-[21px]"><List size={24} strokeWidth={2} /><span>목록</span></div>
                    <div className="flex h-[45px] flex-1 items-center justify-center gap-[21px] rounded-[12px] bg-white shadow-[0_1px_4px_rgba(0,0,0,0.14)]"><MapIcon size={24} strokeWidth={1.8} /><span>지도</span></div>
                    <div className="flex h-[45px] flex-1 items-center justify-center gap-[21px]"><Layers size={24} strokeWidth={1.8} /><span>통합</span></div>
                  </div>
                  <div className="mt-[18px] flex h-[42px] items-center text-[18px] text-[#4a5565]">
                    <span className="w-[82px] text-[#364153]">표시 상한</span>
                    <div className="flex h-[42px] w-[124px] items-center justify-between rounded-[6px] border border-[#e5e5e5] pl-[19px] pr-[2px]"><span>500개</span><ChevronDown size={20} strokeWidth={2.6} /></div>
                    <span className="ml-[18px] flex size-[30px] items-center justify-center rounded-full border border-[#e5e5e5] pl-[1px]">?</span>
                  </div>
                </div>
                <div className="relative ml-[24px] mt-[24px] h-[747px] w-[1124px] overflow-hidden">
                  <MapCanvas />
                  <MapOverlays />
                </div>
              </div>
            </section>

            <aside className={card + " h-[1240px] w-[576px] px-[36px] pt-[44px]"}>
              <div className="flex h-[32px] items-center pr-[15px]">
                <svg width="30" height="30" viewBox="0 0 24 24" fill="none" stroke="currentColor" strokeWidth="1.800" strokeLinecap="round" strokeLinejoin="round"><polygon points="22 3 2 3 10 12.460 10 19 14 21 14 12.460 22 3" /></svg>
                <span className="ml-[12px] flex-1 text-[27px] font-semibold leading-[32px]">필터</span>
                <ChevronUp size={24} strokeWidth={2} />
              </div>
              <div className="mt-[71px] flex h-[48px] justify-between whitespace-nowrap text-[18px] font-medium">
                <div className={box + " flex h-[48px] w-[195px] items-center gap-[15px] pl-[15px]"}><Eye size={24} strokeWidth={2} /><span>선택 항목만 보기</span></div>
                <div className={box + " flex h-[48px] w-[126px] items-center justify-center"}>설정 초기화</div>
              </div>
              <div className="mt-[35px] h-[30px] text-[21px] font-medium leading-[30px]">매각기일</div>
              <div className="mt-[19px] flex gap-[12px]"><DateField label="시작일" /><DateField label="종료일" /></div>
              <div className="mt-[30px] h-[24px] text-[18px] leading-[24px] text-[#4a5565]">매각년도(빠른 선택)</div>
              <div className="mt-[12px] flex flex-wrap gap-x-[12px] gap-y-[12px] text-[18px] font-medium">
                {["2020년", "2021년", "2022년", "2023년", "2024년", "2025년"].map((y) => (
                  <div key={y} className={box + " flex h-[42px] items-center px-[12px] tracking-[0.010em]"}>{y}</div>
                ))}
              </div>
              <div className="mt-[33px]">
                <RangeField title="매각가 (만원)" minPh="최소 매각가" max="500000" muted />
                <RangeField title="건축면적 (평)" minPh="최소 (평)" max="100" />
                <RangeField title="토지면적 (평)" minPh="최소 (평)" max="200" />
                <RangeField title="건축년도" min="1980" max="2024" />
              </div>
            </aside>
          </div>
        </main>

        <div className="absolute left-[29px] top-[1681px] z-20 flex size-[56px] items-center justify-center rounded-full border-2 border-[#161616] bg-[#303030] shadow-[0_8px_28px_rgba(0,0,0,0.12),inset_0_0_0_1.5px_#666]">
          <svg width="20" height="22" viewBox="0 0 20 22" fill="none" strokeWidth="2.600">
            <defs><linearGradient id="nfade" x1="0" y1="0" x2="0" y2="1"><stop offset="0.3" stopColor="#fff" /><stop offset="1" stopColor="#fff" stopOpacity="0" /></linearGradient></defs>
            <path d="M3.300 20V2.500L17.500 20.500" stroke="#fff" />
            <rect x="15.300" y="2" width="2.600" height="15" fill="url(#nfade)" />
          </svg>
        </div>
      </div>

      <div className="flex w-[23px] shrink-0 flex-col items-center bg-[#fcfcfc] pb-[6px] pt-[7px]">
        <svg width="15" height="11" viewBox="0 0 15 11" fill="#8b8b8b" className="shrink-0"><path d="M6.300.8a1.400 1.400 0 0 1 2.400 0l5.500 8.200a1.200 1.200 0 0 1-1 2H1.800a1.200 1.200 0 0 1-1-2z" /></svg>
        <div className="mt-[1000px] h-[483px] w-[13px] shrink-0 rounded-full bg-[#8b8b8b]" />
        <svg width="15" height="11" viewBox="0 0 15 11" fill="#8b8b8b" className="mt-auto shrink-0"><path d="M6.300 10.200a1.400 1.400 0 0 0 2.400 0l5.500-8.200a1.200 1.200 0 0 0-1-2H1.800a1.200 1.200 0 0 0-1 2z" /></svg>
      </div>
    </div>
  );
}
